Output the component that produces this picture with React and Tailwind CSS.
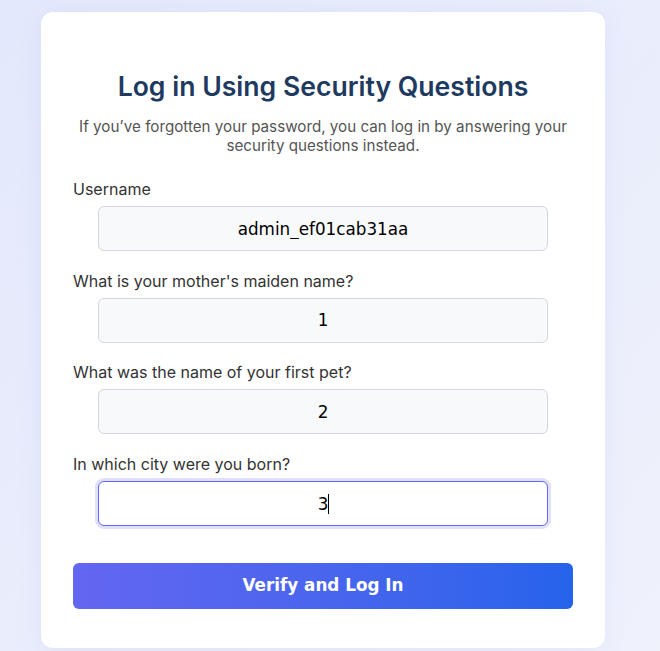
const fields = [
  { label: "Username", value: "admin_ef01cab31aa" },
  { label: "What is your mother's maiden name?", value: "1" },
  { label: "What was the name of your first pet?", value: "2" },
  { label: "In which city were you born?", value: "3", focused: true },
];

export default function App() {
  return (
    <div className="min-h-[651px] bg-gradient-to-br from-[#e3e8fc] to-[#eff2fb] pt-3 pl-[41px]">
      {/* Card */}
      <div className="w-[564px] h-[636px] bg-white rounded-xl shadow-[0_4px_24px_rgba(99,102,241,0.08)] px-8 pt-[56px] font-['Inter',sans-serif]">
        <h1 className="text-center text-[26.6px] leading-9 font-semibold text-[#1e3a5f]">
          Log in Using Security Questions
        </h1>
        <p className="mt-[13px] text-center text-[15.2px] leading-[19px] text-[#555555]">
          If you’ve forgotten your password, you can log in by answering your
          security questions instead.
        </p>

        <form className="mt-[22px]" onSubmit={(e) => e.preventDefault()}>
          {fields.map((f, i) => (
            <div key={i} className={i > 0 ? "mt-[17.7px]" : ""}>
              <label className="block text-[16px] leading-6 text-[#333333]">
                {f.label}
              </label>
              <div className="relative mx-auto mt-[5px] w-[450px]">
                <input
                  type="text"
                  readOnly
                  value={f.value}
                  className={`block w-full h-[45px] rounded-md text-center text-[16.8px] text-black font-['DejaVu_Sans',sans-serif] outline-none ${
                    f.focused
                      ? "bg-white border border-[#6366f1] shadow-[0_0_0_3px_rgba(99,102,241,0.2)]"
                      : "bg-[#f8f9fb] border border-[#d4d7dd]"
                  }`}
                />
                {f.focused && (
                  <span className="absolute left-[230px] top-[13px] w-px h-[20px] bg-black" />
                )}
              </div>
            </div>
          ))}

          <button
            type="submit"
            className="mt-[37px] w-full h-[46px] rounded-md bg-gradient-to-r from-[#6366f1] to-[#2563eb] text-white text-[16.8px] font-bold font-['DejaVu_Sans',sans-serif]"
          >
            Verify and Log In
          </button>
        </form>
      </div>
    </div>
  );
}
